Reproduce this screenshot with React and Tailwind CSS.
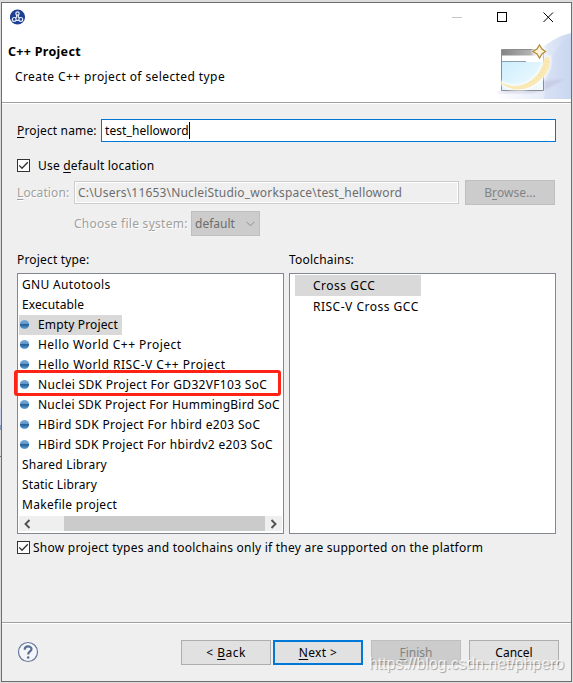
import { useState } from "react";

const PROJECT_TYPES = [
  { name: "GNU Autotools", cls: "tracking-[0.34px]" },
  { name: "Executable", cls: "tracking-[0.1px]" },
  { name: "Empty Project", child: true, cls: "tracking-[0.15px]" },
  { name: "Hello World C++ Project", child: true, cls: "tracking-[0.48px]" },
  { name: "Hello World RISC-V C++ Project", child: true, cls: "tracking-[0.5px]" },
  { name: "Nuclei SDK Project For GD32VF103 SoC", child: true, marked: true, cls: "tracking-[0.31px]" },
  { name: "Nuclei SDK Project For HummingBird SoC", child: true, cls: "tracking-[0.25px]" },
  { name: "HBird SDK Project For hbird e203 SoC", child: true, cls: "tracking-[0.35px]" },
  { name: "HBird SDK Project For hbirdv2 e203 SoC", child: true, cls: "tracking-[0.32px]" },
  { name: "Shared Library", cls: "tracking-[0.21px]" },
  { name: "Static Library", cls: "tracking-[0.12px]" },
  { name: "Makefile project", cls: "tracking-[0.3px]" },
];

const TOOLCHAINS = [
  { name: "Cross GCC", cls: "tracking-[0.5px]" },
  { name: "RISC-V Cross GCC", cls: "tracking-[0.5px]" },
];

// mnemonic letter
function Key({ children }) {
  return <span className="underline decoration-1 underline-offset-2">{children}</span>;
}

function AppIcon() {
  return (
    <svg width="16" height="16" viewBox="0 0 16 16" fill="none">
      <circle cx="7.500" cy="8" r="7.600" fill="#1d3f94" />
      <g stroke="#e6ecfa" strokeWidth="1.200">
        <circle cx="7.500" cy="4.500" r="1.700" />
        <circle cx="4.200" cy="10.400" r="1.900" />
        <circle cx="10.800" cy="10.400" r="1.900" />
        <path d="M6.600 6v2.200L5.300 9M8.400 6v2.200l1.300 0.800M6 11.400h3" />
      </g>
    </svg>
  );
}

function WizardBanner() {
  return (
    <svg width="75" height="66" viewBox="0 0 75 66" fill="none">
      <defs>
        <linearGradient id="sky" x1="0" y1="0" x2="1" y2="0">
          <stop offset="0" stopColor="#ffffff" />
          <stop offset="0.6" stopColor="#e6ecf9" />
          <stop offset="1" stopColor="#ccd8f1" />
        </linearGradient>
        <linearGradient id="pane" x1="0" y1="0" x2="1" y2="1">
          <stop offset="0" stopColor="#cdeefd" />
          <stop offset="1" stopColor="#f4fbff" />
        </linearGradient>
        <linearGradient id="bar" x1="0" y1="0" x2="1" y2="0">
          <stop offset="0" stopColor="#858585" />
          <stop offset="0.7" stopColor="#b4b4b4" />
          <stop offset="1" stopColor="#f0f0f0" />
        </linearGradient>
        <filter id="soft" x="-20%" y="-20%" width="140%" height="140%">
          <feGaussianBlur stdDeviation="0.8" />
        </filter>
      </defs>
      <path d="M75 0C58 4 44 14 36 28C26 46 14 56 0 58V66H75Z" fill="url(#sky)" />
      <path d="M75 3C64 9 55 22 52 38L48 66H75Z" fill="#c9d5f0" opacity="0.4" />
      <path d="M2 59L18 56H48V48L69 46L49 57L36 60H2Z" fill="#bfbfdc" opacity="0.55" filter="url(#soft)" />
      <path d="M5.500 16.500H47.500V57.500H5.500Z" fill="#fff" stroke="#8c8c8c" />
      <path d="M6 17H47V22.500H6Z" fill="url(#bar)" />
      <path d="M6 29H47V57H6Z" fill="url(#pane)" />
      <path d="M6 28.500H30" stroke="#8d9fac" />
      <path d="M3 48C11 58 29 60 42 49C52 41 56 32 53 24C50 23 49 24 48 27C46 37 40 45 31 50C20 55 12 53 3 48Z" fill="#fff" stroke="#fff" strokeWidth="3" opacity="0.75" filter="url(#soft)" />
      <path d="M3 48C11 58 29 60 42 49C52 41 56 32 53 24C50 23 49 24 48 27C46 37 40 45 31 50C20 55 12 53 3 48Z" fill="#fae9b4" />
      <path d="M51 28L47 38L39 47L29 52" stroke="#ecd488" strokeDasharray="1 3" />
      <circle cx="43" cy="18" r="7" fill="#fff" opacity="0.7" filter="url(#soft)" />
      <path d="M43.500 12L46 16L49.500 18.500L46 21L43.500 25L41 21L37 18.500L41 16Z" fill="#fdf3d5" stroke="#b4893b" strokeWidth="1.300" />
    </svg>
  );
}

function Bullet() {
  return (
    <svg width="10" height="10" viewBox="0 0 10 10">
      <defs>
        <linearGradient id="ball" x1="0" y1="0" x2="0" y2="1">
          <stop offset="0" stopColor="#7fb0d8" />
          <stop offset="0.4" stopColor="#5f97c8" />
          <stop offset="0.45" stopColor="#245f98" />
          <stop offset="0.65" stopColor="#2f71aa" />
          <stop offset="1" stopColor="#6fa9d6" />
        </linearGradient>
      </defs>
      <circle cx="4.500" cy="4.500" r="4.600" fill="url(#ball)" />
    </svg>
  );
}

function Checkbox({ checked, onClick }) {
  return (
    <button onClick={onClick} className="flex size-[13px] shrink-0 items-center justify-center border border-[#333] bg-white">
      {checked && (
        <svg width="11" height="11" viewBox="0 0 11 11" fill="none">
          <path d="M1.200 5.400L4 8.300L9.800 2.300" stroke="#333" strokeWidth="1.300" />
        </svg>
      )}
    </button>
  );
}

function Button({ children, className }) {
  return (
    <button className={"flex h-[25px] w-[90px] shrink-0 items-center justify-center whitespace-pre " + className}>
      {children}
    </button>
  );
}

function Chevron({ d }) {
  return (
    <svg width="9" height="10" viewBox="0 0 9 10" fill="none">
      <path d={d} stroke="#505050" strokeWidth="1.900" />
    </svg>
  );
}

export default function App() {
  const [useDefault, setUseDefault] = useState(true);
  const [onlySupported, setOnlySupported] = useState(true);
  const [selected, setSelected] = useState("Empty Project");
  const [toolchain, setToolchain] = useState("Cross GCC");

  return (
    <div className="flex h-[683px] w-[573px] overflow-hidden bg-[#dcdcdc] font-['Noto_Sans',sans-serif] text-[12px] leading-[20px] text-black">
      {/* sliver of the window behind */}
      <div className="w-px shrink-0 pt-[407px]">
        <div className="h-[18px] bg-[#c9d3e6]" />
        <div className="h-[5px] bg-[#8a9cc0]" />
        <div className="mt-[26px] h-px bg-[#777]" />
      </div>
      <div className="mt-[2px] flex h-[680px] w-[571px] flex-col border border-[#6e6e6e] bg-[#efefef]">
        {/* title bar + wizard header */}
        <div className="flex h-[99px] shrink-0 justify-between bg-white">
          <div className="flex flex-col pl-[6px] pt-[6px]">
            <div className="pl-[2px]"><AppIcon /></div>
            <h1 className="mt-[17px] whitespace-pre text-[12.500px] font-bold leading-[20px] tracking-[0.3px]">C++ Project</h1>
            <p className="mt-[5px] whitespace-pre pl-[7px] tracking-[0.41px]">Create C++ project of selected type</p>
          </div>
          <div className="flex flex-col items-end">
            <div className="flex h-[30px] items-center pr-[16px]">
              <svg width="104" height="12" viewBox="0 0 104 12" fill="none" shapeRendering="crispEdges">
                <path d="M1 5.500H11" stroke="#c4c4c4" />
                <path d="M46.500 0.500H55.500V9.500H46.500Z" stroke="#000" />
                <path d="M92.500 0.500L102 10M102 0.500L92.500 10" stroke="#000" shapeRendering="auto" />
              </svg>
            </div>
            <WizardBanner />
          </div>
        </div>
        <div className="h-[2px] shrink-0 border-t border-[#a0a0a0] bg-white" />

        <div className="flex h-[518px] shrink-0 flex-col pl-[15px] pt-[15px]">
          <div className="flex h-[23px] items-center">
            <label className="w-[84px] whitespace-pre tracking-[0.16px]"><Key>P</Key>roject name:</label>
            <div className="flex h-[23px] w-[455px] items-center border border-[#0078d7] bg-white pl-[3px]">
              <span className="tracking-[0.08px]">test_helloword</span>
              <span className="h-[17px] w-px bg-black" />
            </div>
          </div>

          <div className="mt-[13px] flex h-[21px] items-center">
            <Checkbox checked={useDefault} onClick={() => setUseDefault(!useDefault)} />
            <span className="ml-[8px] whitespace-pre tracking-[0.2px]">Use <Key>d</Key>efault location</span>
          </div>

          <div className="mt-[4px] flex h-[25px] items-center text-[#6d6d6d]">
            <label className="w-[57px] tracking-[0.1px] text-[#a0a0a0] [text-shadow:1px_1px_0_#fff]"><Key>L</Key>ocation:</label>
            <div className="flex h-[23px] w-[385px] items-center whitespace-pre border border-[#ccc] bg-[#efefef] pl-[3px] tracking-[0.18px] shadow-[inset_0_0_0_1px_#fff]">
              C:\Users\11653\NucleiStudio_workspace\test_helloword
            </div>
            <Button className="ml-[6px] border border-[#bfbfbf] bg-[#ccc] text-[#838383]">B<Key>r</Key>owse...</Button>
          </div>

          <div className="mt-[6px] flex h-[25px] items-center pl-[57px]">
            <label className="w-[117px] whitespace-pre tracking-[0.27px] text-[#a0a0a0] [text-shadow:1px_1px_0_#fff]">Choose file s<Key>y</Key>stem:</label>
            <div className="flex h-[25px] w-[69px] items-center justify-between border border-[#bfbfbf] bg-[#ccc] pl-[3px] pr-[4px] text-[#6d6d6d]">
              <span>default</span>
              <svg width="9" height="6" viewBox="0 0 9 6" fill="none">
                <path d="M0.500 0.800L4.500 4.800L8.500 0.800" stroke="#8f8f8f" />
              </svg>
            </div>
          </div>

          <div className="mt-[14px] flex h-[20px]">
            <span className="w-[272px] tracking-[0.17px]">Project type:</span>
            <span className="tracking-[0.2px]">Toolchains:</span>
          </div>

          <div className="mt-[3px] flex gap-[5px]">
            <div className="h-[261px] w-[267px] border border-[#828790] bg-white px-px pt-px">
              {PROJECT_TYPES.map((type) => (
                <div key={type.name} onClick={() => setSelected(type.name)} className="relative flex h-[20px] items-center">
                  <div
                    className={
                      "flex h-[20px] items-center whitespace-pre pr-[4px] " +
                      (type.child ? "pl-px " : "pl-[3px] ") +
                      (selected === type.name ? "bg-[#d9d9d9]" : "")
                    }
                  >
                    {type.child && <span className="mr-[8px]"><Bullet /></span>}
                    <span className={type.cls}>{type.name}</span>
                  </div>
                  {type.marked && (
                    <div className="absolute left-[-5px] top-[-5px] h-[26px] w-[267px] rounded-[3px] border-[3px] border-[#ff2315]" />
                  )}
                </div>
              ))}
              <div className="mt-px flex h-[15px] items-center bg-[#efefef]">
                <span className="flex w-[45px] pl-[4px]"><Chevron d="M6.500 1L2.500 5L6.500 9" /></span>
                <span className="h-[15px] w-[201px] bg-[#cbcbcb]" />
                <span className="pl-[5px]"><Chevron d="M1.500 1L5.500 5L1.500 9" /></span>
              </div>
            </div>

            <div className="h-[261px] w-[267px] border border-[#828790] bg-white pl-[5px] pt-px">
              {TOOLCHAINS.map((item) => (
                <div
                  key={item.name}
                  onClick={() => setToolchain(item.name)}
                  className={"flex h-[21px] w-[126px] items-center whitespace-pre pl-[18px] " + (toolchain === item.name ? "bg-[#d9d9d9]" : "")}
                >
                  <span className={item.cls}>{item.name}</span>
                </div>
              ))}
            </div>
          </div>

          <div className="mt-[3px] flex h-[21px] items-center">
            <Checkbox checked={onlySupported} onClick={() => setOnlySupported(!onlySupported)} />
            <span className="ml-[3px] whitespace-pre tracking-[0.24px]">Show project types and toolchains only if they are supported on the platform</span>
          </div>
        </div>

        {/* wizard buttons */}
        <div className="h-[2px] shrink-0 border-t border-[#a0a0a0] bg-white" />
        <div className="relative flex h-[57px] items-center">
          <svg className="mb-[2px] ml-[15px]" width="22" height="22" viewBox="0 0 22 22" fill="none">
            <circle cx="11" cy="11" r="9.500" fill="#f4f6fa" stroke="#66799b" strokeWidth="1.200" />
            <path d="M7.700 8.700C7.700 4.500 14.500 4.500 14.500 8C14.500 10.500 11.200 10.500 11.200 13.500" stroke="#5b6f93" strokeWidth="2.200" />
            <circle cx="11.200" cy="16.500" r="1.300" fill="#5b6f93" />
          </svg>
          <Button className="ml-[142px] border border-[#adadad] bg-[#e1e1e1] tracking-[0.5px]">{"< "}<Key>B</Key>ack</Button>
          <Button className="ml-[2px] border-2 border-[#0078d7] bg-[#e1e1e1] tracking-[0.4px]"><Key>N</Key>{"ext >"}</Button>
          <Button className="ml-[8px] border border-[#bfbfbf] bg-[#ccc] text-[#838383]"><Key>F</Key>inish</Button>
          <Button className="ml-[8px] border border-[#adadad] bg-[#e1e1e1]">Cancel</Button>
          <span className="absolute left-[367px] top-[30px] whitespace-pre font-['Liberation_Sans',sans-serif] text-[15.800px] leading-[20px] text-white/80 [text-shadow:1px_1px_1px_#0005]">
            https://blog.csdn.net/phpero
          </span>
        </div>
      </div>
    </div>
  );
}
